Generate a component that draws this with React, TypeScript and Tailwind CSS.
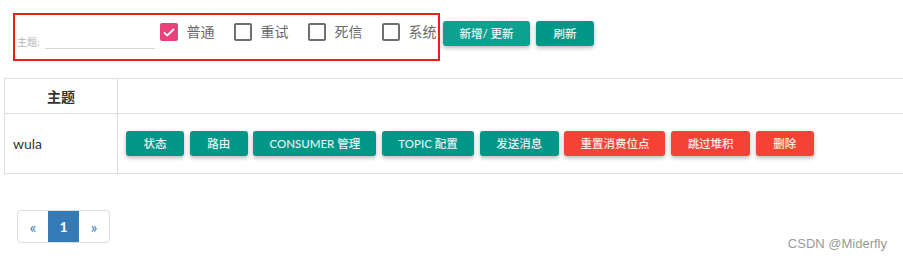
const font = 'font-["Lato","Noto_Sans_CJK_SC",sans-serif]';

const kinds = [
  { label: '普通', checked: true },
  { label: '重试', checked: false },
  { label: '死信', checked: false },
  { label: '系统', checked: false },
];

const actions = [
  { label: '状态', w: 'w-[58px]', danger: false },
  { label: '路由', w: 'w-[58px]', danger: false },
  { label: 'CONSUMER 管理', w: 'w-[123px]', danger: false },
  { label: 'TOPIC 配置', w: 'w-[92px]', danger: false },
  { label: '发送消息', w: 'w-[79px]', danger: false },
  { label: '重置消费位点', w: 'w-[101px]', danger: true },
  { label: '跳过堆积', w: 'w-[79px]', danger: true },
  { label: '删除', w: 'w-[58px]', danger: true },
];

function Check({ checked }: { checked: boolean }) {
  if (checked) {
    return (
      <span className="flex h-[18px] w-[18px] items-center justify-center rounded-[2px] bg-[#ec407a]">
        <svg width="14" height="14" viewBox="0 0 14 14" fill="none">
          <path d="M2 7.4l3.2 3L12 4" stroke="#fff" strokeWidth="1.8" />
        </svg>
      </span>
    );
  }
  return <span className="h-[18px] w-[18px] rounded-[2px] border-2 border-[#6f6f6f]" />;
}

function Btn({ children, w, danger, light }: { children: React.ReactNode; w: string; danger?: boolean; light?: boolean }) {
  const bg = danger ? 'bg-[#f44336]' : light ? 'bg-[#0da190]' : 'bg-[#009688]';
  return (
    <button
      type="button"
      className={`${w} ${bg} flex h-[25px] shrink-0 items-center justify-center rounded-[3px] text-[11.5px] font-medium text-white/90 shadow-[0_2px_4px_rgba(0,0,0,0.28)]`}
    >
      {children}
    </button>
  );
}

export default function App() {
  return (
    <div className={`relative h-[262px] w-[903px] overflow-hidden bg-white ${font}`}>
      <div className="ml-[13px] mt-[13px] flex items-start">
        <div className="flex h-[48px] w-[427px] items-start border-2 border-[#f01c1c]">
          <span className="ml-[2px] mt-[21px] text-[10px] leading-[12px] text-[#b5b5b5]">主题:</span>
          <div className="ml-[5px] mt-[14px] h-[20px] w-[110px] border-b border-[#d9d9d9]" />
          <div className="ml-[5px] mt-[8px] flex items-center gap-[19px]">
            {kinds.map((k) => (
              <div key={k.label} className="flex items-center gap-[9px]">
                <Check checked={k.checked} />
                <span className="text-[14px] leading-[18px] text-[#6a6a6a]">{k.label}</span>
              </div>
            ))}
          </div>
        </div>
        <div className="ml-[3px] mt-[8px] flex gap-[6px]">
          <Btn w="w-[87px]" light>
            新增/ 更新
          </Btn>
          <Btn w="w-[58px]">刷新</Btn>
        </div>
      </div>

      <table className="ml-[4px] mt-[17px] w-[940px] border-collapse text-[14px] text-[#333]">
        <tbody>
          <tr className="h-[35px]">
            <th className="w-[113px] border border-[#ddd] text-center font-bold">主题</th>
            <th className="border border-[#ddd]" />
          </tr>
          <tr className="h-[60px]">
            <td className="border border-[#ddd] px-[8px]">wula</td>
            <td className="border border-[#ddd] px-[8px]">
              <div className="flex gap-[5.7px]">
                {actions.map((a) => (
                  <Btn key={a.label} w={a.w} danger={a.danger}>
                    {a.label}
                  </Btn>
                ))}
              </div>
            </td>
          </tr>
        </tbody>
      </table>

      <div className="ml-[17px] mt-[36px] flex h-[33px] w-[93px] overflow-hidden rounded-[4px] border border-[#ddd] text-[14px]">
        <span className="flex w-[30px] items-center justify-center text-[16px] text-[#337ab7]">«</span>
        <span className="flex w-[31px] items-center justify-center bg-[#337ab7] font-bold text-white">1</span>
        <span className="flex w-[30px] items-center justify-center text-[16px] text-[#337ab7]">»</span>
      </div>

      <span className='absolute bottom-[9px] right-[16px] font-["Liberation_Sans",sans-serif] text-[13px] text-[#9a9a9a]'>
        CSDN @Miderfly
      </span>
    </div>
  );
}
